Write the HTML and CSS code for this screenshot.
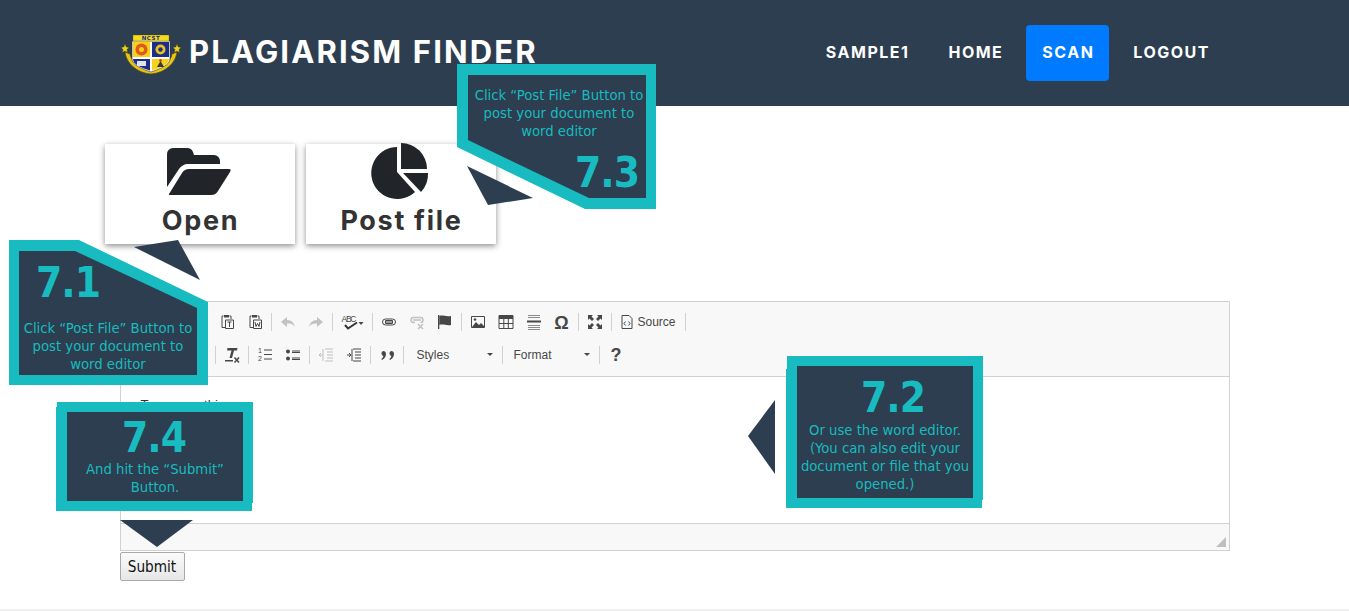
FILE: index.html
```html
<!DOCTYPE html>
<html lang="en">
<head>
<meta charset="utf-8">
<title>Plagiarism Finder</title>
<link rel="stylesheet" href="styles.css">
</head>
<body>
<header class="navbar">
  <a class="brand" href="#">
    <svg class="logo" viewBox="0 0 60 40" width="60" height="40">
      <path d="M4 17C5 28 16 38 30 39 44 38 55 28 56 17L51 19C50 27 40 33 30 34 20 33 10 27 9 19z" fill="#e8c418" stroke="#4a4a10" stroke-width=".7"/>
      <path d="M4 9l1.200 3 2.800.4-2 2 .5 3L4 16l-2.500 1.400.5-3-2-2 2.800-.4zM56 9l1.200 3 2.800.4-2 2 .5 3L56 16l-2.500 1.400.5-3-2-2 2.800-.4z" fill="#f2d31c" stroke="#4a4a10" stroke-width=".4"/>
      <path d="M11 6h38v18c0 6-10 10-19 13-9-3-19-7-19-13z" fill="#fff" stroke="#333" stroke-width=".6"/>
      <path d="M12 7h17v15H12z" fill="#f7d21a"/>
      <circle cx="20.500" cy="14.500" r="6" fill="#e2561f"/>
      <circle cx="20.500" cy="14.500" r="2.500" fill="#f7d21a"/>
      <path d="M31 7h17v15H31z" fill="#1e2d85"/>
      <circle cx="39.500" cy="14.500" r="5" fill="#e6c41f"/>
      <circle cx="39.500" cy="14.500" r="2.200" fill="#1e2d85"/>
      <path d="M12 24h17v11.500C21 33 12 30 12 24z" fill="#1e2d85"/>
      <path d="M16 26h9v5h-9z" fill="#dfe3ea"/>
      <path d="M31 24h17c0 6-9 9-17 11.500z" fill="#f7d21a"/>
      <path d="M36 32l3.500-6 3.500 6z" fill="#3a3a3a"/>
      <circle cx="39.500" cy="25.500" r="1.300" fill="#c62a1f"/>
      <path d="M12 0h36v6H12z" fill="#f5dc1a" stroke="#6b6210" stroke-width=".4"/>
      <text x="30" y="5.200" class="logo-text" text-anchor="middle">NCST</text>
    </svg>
    <span class="brand-name">PLAGIARISM FINDER</span>
  </a>
  <nav class="nav">
    <a class="nav-link" href="#">SAMPLE1</a>
    <a class="nav-link" href="#">HOME</a>
    <a class="nav-link active" href="#">SCAN</a>
    <a class="nav-link" href="#">LOGOUT</a>
  </nav>
</header>

<main class="container">
  <div class="actions">
    <button class="card" type="button">
      <svg class="card-icon icon-folder" viewBox="0 0 64 47">
        <path d="M0 6a6 6 0 0 1 6-6h14c3 0 5 1.500 6 4l1 3h20a6 6 0 0 1 6 6v3H21c-4 0-7 2-9 5L0 39z" fill="#212529"/>
        <path d="M2 46l13-21c2-3 4-4 7-4h40c2 0 2 1 1 3L51 43c-2 3-4 4-7 4H3c-1 0-1.500-.4-1-1z" fill="#212529"/>
      </svg>
      <span class="card-label">Open</span>
    </button>
    <button class="card" type="button">
      <svg class="card-icon icon-pie" viewBox="1 0 60 58">
        <path d="M27 4V29L45 49A26 26 0 1 1 27 4z" fill="#212529"/>
        <path d="M31 0A26 26 0 0 1 57 26H31z" fill="#212529"/>
        <path d="M33 30H58A26 26 0 0 1 51 49z" fill="#212529"/>
      </svg>
      <span class="card-label">Post file</span>
    </button>
  </div>

  <div class="editor">
    <div class="toolbar">
      <div class="tool-row">
        <span class="tool"><svg viewBox="0 0 16 16"><path d="M4.500 2H3v11.500h3M10.500 2H12v3" class="ln"/><path d="M5 1h5v2.500H5z" class="fl"/><path d="M6.500 6h8v8.500h-8zM8.500 8h4M10.500 8v5" class="ln"/></svg></span>
        <span class="tool"><svg viewBox="0 0 16 16"><path d="M4.500 2H3v11.500h3M10.500 2H12v3" class="ln"/><path d="M5 1h5v2.500H5z" class="fl"/><path d="M6.500 6h8v8.500h-8zM8 8l1 4.500 1.500-3 1.500 3 1-4.500" class="ln"/></svg></span>
        <i class="sep"></i>
        <span class="tool dim"><svg viewBox="0 0 16 16"><path d="M1 8l6-5v3c5 0 7 3 8 7-2-3-4-3.500-8-3.500V13z" class="fl"/></svg></span>
        <span class="tool dim"><svg viewBox="0 0 16 16"><path d="M15 8L9 3v3C4 6 2 9 1 13c2-3 4-3.500 8-3.500V13z" class="fl"/></svg></span>
        <i class="sep"></i>
        <span class="tool wide"><svg viewBox="0 0 26 16"><text x="2.500" y="8" class="abc" textLength="15">ABC</text><path d="M6 11l3 3.500L18 8.500" class="chk"/><path d="M19.500 8h5L22 11z" class="fl"/></svg></span>
        <i class="sep"></i>
        <span class="tool"><svg viewBox="0 0 16 16"><path d="M6 5H4.500a3 3 0 0 0 0 6H6M10 5h1.500a3 3 0 0 1 0 6H10M4 8h8M6 5h4M6 11h4" class="ln"/><path d="M4.500 6.500h7v3h-7z" class="ln"/></svg></span>
        <span class="tool dim2"><svg viewBox="0 0 16 16"><path d="M6 3.500H4.500a2.500 2.500 0 0 0 0 5H6M10 3.500h1.500a2.500 2.500 0 0 1 0 5M4 6h8M6 3.500h4" class="ln2"/><path d="M9 10l5 5M14 10l-5 5" class="ln2"/></svg></span>
        <span class="tool"><svg viewBox="0 0 16 16"><path d="M1 1h1.300v14H1z" class="fl"/><path d="M2.300 2c3-1.500 6 1 11.700 0v9c-5 1-8-1.500-11.700 0z" class="fl"/></svg></span>
        <i class="sep"></i>
        <span class="tool"><svg viewBox="0 0 16 16"><path d="M1.500 2.500h13v11h-13z" class="ln"/><path d="M2 13l4-5 3 3 2-2 4 4z" class="fl"/><circle cx="5" cy="5.500" r="1.300" class="fl"/></svg></span>
        <span class="tool"><svg viewBox="0 0 16 16"><path d="M1 1.500h14v13H1z" class="ln"/><path d="M1 1.500h14v3.500H1z" class="fl"/><path d="M1 9.500h14M5.800 5v9M10.300 5v9" class="ln"/></svg></span>
        <span class="tool"><svg viewBox="0 0 16 16"><path d="M2 1.500h12M2 3.500h12M2 11.500h12M2 13.500h12M2 15.500h12" class="ln-soft"/><path d="M1 6.500h14v2H1z" class="fl"/></svg></span>
        <span class="tool omega">Ω</span>
        <i class="sep"></i>
        <span class="tool"><svg viewBox="0 0 16 16"><path d="M1 1h5L4.500 2.500 7 5 5 7 2.500 4.500 1 6zM15 1v5l-1.500-1.500L11 7 9 5l2.500-2.500L10 1zM1 15v-5l1.500 1.500L5 9l2 2-2.500 2.500L6 15zM15 15h-5l1.500-1.500L9 11l2-2 2.500 2.500L15 10z" class="fl"/></svg></span>
        <i class="sep"></i>
        <span class="tool src"><svg viewBox="0 0 16 16"><path d="M3 1.500h7l3 3v10H3zM6.500 7.500L5 9.500l1.500 2M9.500 7.500l1.500 2-1.500 2" class="ln"/></svg><span class="src-label">Source</span></span>
        <i class="sep"></i>
      </div>
      <div class="tool-row">
        <i class="sep"></i>
        <span class="tool"><svg viewBox="0 0 16 16"><path d="M3.500 1h10l-.5 2.500H10L8 11H5.500l2-7.500H3zM1 13h8v1.500H1z" class="fl"/><path d="M10.500 10.500l4.500 5M15 10.500l-4.500 5" class="ln2"/></svg></span>
        <i class="sep"></i>
        <span class="tool"><svg viewBox="0 0 16 16"><path d="M7 3h8M7 7.500h8M7 12h8" class="ln"/><text x="1" y="6" class="num">1</text><text x="1" y="14" class="num">2</text></svg></span>
        <span class="tool"><svg viewBox="0 0 16 16"><circle cx="3" cy="4.500" r="2" class="fl"/><circle cx="3" cy="11.500" r="2" class="fl"/><path d="M7 4h8M7 5.500h8M7 11h8M7 12.500h8" class="ln"/></svg></span>
        <i class="sep"></i>
        <span class="tool dim2"><svg viewBox="0 0 16 16"><path d="M7 2h8M9 5h6M9 8h6M9 11h6M7 14h8M5 2v12" class="ln"/><path d="M5 8H1M3 6L1 8l2 2" class="ln"/></svg></span>
        <span class="tool"><svg viewBox="0 0 16 16"><path d="M7 2h8M9 5h6M9 8h6M9 11h6M7 14h8M6 2v12" class="ln"/><path d="M1 8h4M3 6l2 2-2 2" class="ln"/></svg></span>
        <i class="sep"></i>
        <span class="tool"><svg viewBox="0 0 16 16"><path d="M4 4a3 3 0 0 1 3 3c0 3-2 5-4 6l-.7-1c1-.7 1.800-1.500 2-3a2.700 2.700 0 0 1-.3-5zM12 4a3 3 0 0 1 3 3c0 3-2 5-4 6l-.7-1c1-.7 1.800-1.500 2-3a2.700 2.700 0 0 1-.3-5z" class="fl"/></svg></span>
        <i class="sep"></i>
        <span class="combo styles">Styles<b class="caret"></b></span>
        <i class="sep"></i>
        <span class="combo format">Format<b class="caret"></b></span>
        <i class="sep"></i>
        <span class="tool help">?</span>
      </div>
    </div>
    <div class="editor-body"><p class="editor-text">Type something</p></div>
    <div class="editor-foot"><b class="resizer"></b></div>
  </div>
  <button class="submit" type="submit">Submit</button>
</main>
<div class="page-line"></div>

<aside class="callout c71">
  <div class="callout-in"><strong class="callout-num">7.1</strong><p class="callout-text">Click “Post File” Button to post your document to word editor</p></div>
</aside>
<aside class="callout c72">
  <div class="callout-in"><strong class="callout-num">7.2</strong><p class="callout-text">Or use the word editor. (You can also edit your document or file that you opened.)</p></div>
</aside>
<aside class="callout c73">
  <div class="callout-in"><p class="callout-text">Click “Post File” Button to post your document to word editor</p><strong class="callout-num">7.3</strong></div>
</aside>
<aside class="callout c74">
  <div class="callout-in"><strong class="callout-num">7.4</strong><p class="callout-text">And hit the “Submit” Button.</p></div>
</aside>
<i class="pointer p71"></i>
<i class="pointer p72"></i>
<i class="pointer p73"></i>
<i class="pointer p74"></i>
</body>
</html>
```
FILE: styles.css
```css
* { box-sizing: border-box; }
html, body { margin: 0; height: 611px; overflow: hidden; }
body { position: relative; background: #fff; color: #212529; font-family: "Liberation Sans", Arial, sans-serif; }
.navbar { height: 106px; background: #2c3e50; display: flex; align-items: center; justify-content: space-between; padding: 0 124px 1px 121px; }
.brand { display: flex; align-items: center; gap: 8px; color: #fff; text-decoration: none; }
.logo { display: block; margin-top: 4px; }
.logo-text { font: 700 5.500px "DejaVu Sans", sans-serif; fill: #1c2a7a; letter-spacing: .5px; }
.brand-name { font-family: Inter, sans-serif; font-weight: 700; font-size: 31px; letter-spacing: 2.150px; white-space: nowrap; padding-bottom: 2px; }
.nav { display: flex; align-items: center; }
.nav-link { height: 56px; display: flex; align-items: center; padding: 0 15px 2px 16px; margin-left: 8px; border-radius: 4px; color: #fff; text-decoration: none; font-family: Inter, sans-serif; font-weight: 700; font-size: 16px; letter-spacing: 1.500px; }
.nav-link.active { background: #007bff; }
.container { width: 1110px; margin: 0 auto; padding-top: 38px; }
.actions { display: flex; gap: 11px; margin-left: -15px; }
.card { width: 190px; height: 100px; padding: 0; border: 0; background: #fff; box-shadow: 0 2px 6px rgba(0,0,0,.45); display: flex; flex-direction: column; align-items: center; position: relative; font-family: inherit; }
.card-icon { display: block; flex: none; }
.icon-folder { width: 64px; height: 47px; margin: 4px 2px 9px 0; }
.icon-pie { width: 60px; height: 58px; margin: -1px 0 3px; }
.card-label { font-family: Inter, sans-serif; font-weight: 700; font-size: 27px; line-height: 33px; color: #333; letter-spacing: 1.700px; padding-left: 2px; }
.editor { width: 1110px; height: 250px; margin-top: 57px; border: 1px solid #d1d1d1; display: flex; flex-direction: column; }
.toolbar { height: 75px; background: #f8f8f8; border-bottom: 1px solid #d1d1d1; padding: 3px 0 0 92px; }
.tool-row { height: 33px; display: flex; align-items: center; }
.tool { width: 28px; height: 26px; display: flex; align-items: center; justify-content: center; color: #474747; flex: none; }
.tool svg { width: 16px; height: 16px; display: block; flex: none; }
.tool.wide { width: 35px; }
.tool.wide svg { width: 26px; }
.dim { opacity: .3; }
.dim2 { opacity: .3; }
.ln { fill: none; stroke: #474747; stroke-width: 1; }
.ln2 { fill: none; stroke: #474747; stroke-width: 1.500; }
.ln-soft { fill: none; stroke: #8a8a8a; stroke-width: 1; }
.fl { fill: #474747; }
.chk { fill: none; stroke: #333; stroke-width: 2; }
.abc { font: 8.500px "Liberation Sans", sans-serif; fill: #474747; }
.num { font: 7px "Liberation Sans", sans-serif; fill: #474747; }
.sep { width: 1px; height: 18px; background: #d1d1d1; margin: 0 2px; flex: none; }
.omega { font: 700 18px "Liberation Sans", sans-serif; padding-top: 3px; }
.src { width: auto; padding: 0 7px 0 5px; gap: 3px; }
.src-label { font-size: 12px; color: #474747; }
.combo { height: 26px; display: flex; align-items: center; justify-content: space-between; font-size: 12px; color: #484848; padding: 0 7px 0 11px; flex: none; }
.styles { width: 94px; }
.format { width: 92px; padding-left: 9px; }
.caret { width: 0; height: 0; border: 3px solid transparent; border-top-color: #474747; border-bottom: 0; }
.help { font: 700 18px "Liberation Sans", sans-serif; padding: 1px 0 0 1px; }
.editor-body { flex: 1; background: #fff; padding: 18px 20px; }
.editor-text { margin: 0; font-size: 13px; line-height: 1.600; color: #333; }
.editor-foot { height: 27px; background: #f8f8f8; border-top: 1px solid #d1d1d1; position: relative; }
.resizer { position: absolute; right: 3px; bottom: 3px; width: 0; height: 0; border-style: solid; border-width: 0 0 10px 10px; border-color: transparent transparent #bfbfbf transparent; }
.submit { display: block; margin-top: 1px; width: 65px; height: 29px; padding: 0; background: linear-gradient(#fbfbfb, #e6e6e6); border: 1px solid #a9a9a9; border-radius: 2px; font-family: "DejaVu Sans", sans-serif; font-stretch: condensed; font-size: 15.200px; color: #111; }
.page-line { position: absolute; left: 0; right: 0; top: 609px; height: 2px; background: #f0f0f0; }

.callout { position: absolute; background: #18bbbf; }
.callout-in { width: 100%; height: 100%; background: #2c3e50; color: #18bbbf; display: flex; flex-direction: column; align-items: center; text-align: center; }
.callout-num { display: block; font-family: "DejaVu Sans", sans-serif; font-stretch: condensed; font-weight: 700; font-size: 42px; line-height: 44px; letter-spacing: -1px; }
.callout-text { margin: 0; font-family: "DejaVu Sans", sans-serif; font-stretch: condensed; font-size: 14.700px; line-height: 18px; }

.c71 { left: 9px; top: 240px; width: 199px; height: 145px; padding: 11px 11px 10px 10px; clip-path: polygon(0 0, 70px 0, 199px 62px, 199px 145px, 0 145px); }
.c71 .callout-in { clip-path: polygon(0 0, 56px 0, 178px 57px, 178px 124px, 0 124px); }
.c71 .callout-num { align-self: flex-start; margin: 10px 0 14px 17px; }
.c72 { left: 786px; top: 356px; width: 197px; height: 152px; padding: 10px 10px 10px 11px; clip-path: polygon(1px 0, 197px 0, 197px 144px, 196px 144px, 196px 152px, 0 152px, 0 13px, 1px 13px); }
.c72 .callout-num { margin: 10px 0 1px 16px; }
.c72 .callout-text { padding: 0 3px; }
.c73 { left: 457px; top: 64px; width: 199px; height: 145px; padding: 11px 10px 11px 11px; clip-path: polygon(0 0, 199px 0, 199px 145px, 128px 145px, 0 83px); }
.c73 .callout-in { clip-path: polygon(0 0, 178px 0, 178px 123px, 121px 123px, 0 65px); }
.c73 .callout-num { align-self: flex-end; margin: 11px 7px 0 0; }
.c73 .callout-text { margin-top: 11px; padding-left: 4px; }
.c74 { left: 56px; top: 402px; width: 197px; height: 109px; padding: 10px 10px 10px 11px; clip-path: polygon(1px 0, 197px 0, 197px 101px, 196px 101px, 196px 109px, 0 109px, 0 5px, 1px 5px); }
.c74 .callout-num { margin: 4px 2px 0 0; }
.c74 .callout-text { margin-top: 0; padding: 0 12px; }

.pointer { position: absolute; background: #2c3e50; }
.p71 { left: 134px; top: 240px; width: 66px; height: 40px; clip-path: polygon(0 7px, 44px 0, 66px 40px); }
.p72 { left: 748px; top: 400px; width: 27px; height: 74px; clip-path: polygon(0 36px, 27px 0, 27px 74px); }
.p73 { left: 467px; top: 166px; width: 66px; height: 39px; clip-path: polygon(0 0, 66px 32px, 21px 39px); }
.p74 { left: 120px; top: 520px; width: 73px; height: 27px; clip-path: polygon(0 0, 73px 0, 37px 27px); }
```
